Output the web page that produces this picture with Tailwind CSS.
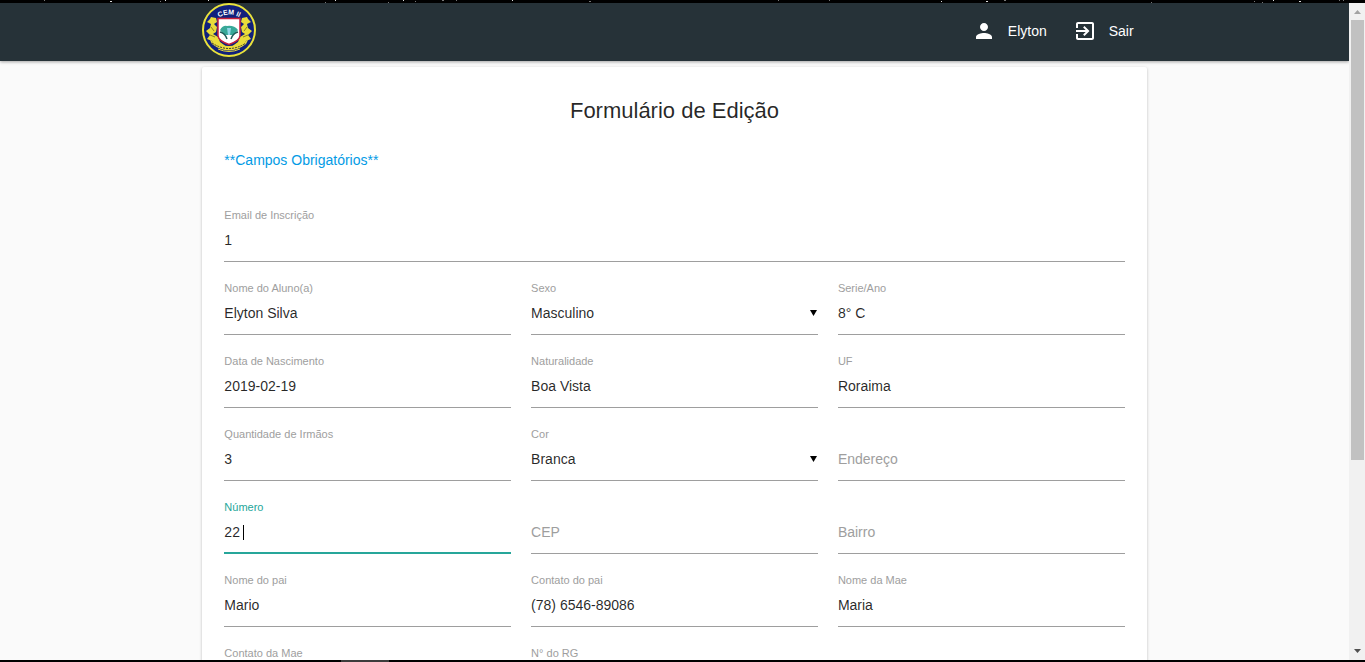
<!DOCTYPE html>
<html lang="pt-BR">
<head>
    <meta charset="UTF-8">
    <meta name="viewport" content="width=device-width, initial-scale=1.0">
    <title>Formulário de Edição</title>
    <script src="https://cdn.jsdelivr.net/npm/@tailwindcss/browser@4"></script>
</head>
<body class="flex h-screen flex-col overflow-hidden bg-black font-['Liberation_Sans',Arial,sans-serif] text-sm text-black/85">
<!-- Borda superior da janela -->
<div class="h-[3px] shrink-0 bg-black">
    <svg class="block h-[3px] w-full" aria-hidden="true">
        <path d="M110 1.500h2M165 .5h1M208 .5h1M335 .5h1M403 .5h1M512 .5h1M941 1.500h1M986 1.500h2M1273 .5h1M1299 1.500h2" stroke="#ddd"/>
        <path d="M44 .5h1M160 1.500h1M325 2.500h1M388 2.500h1M415 1.500h1M442 .5h2M456 .5h1M589 1.500h2M778 .5h1M829 .5h1M1004 .5h2M1151 2.500h1M1254 1.500h1M1262 2.500h1M1339 .5h1M1343 .5h1" stroke="#777"/>
    </svg>
</div>

<div class="flex min-h-0 flex-1">
    <div class="min-w-0 flex-1 overflow-hidden bg-[#fafafa]">
        <!-- Navbar -->
        <nav class="relative h-[58px] bg-[#263238] text-white shadow-[0_1px_3px_rgba(0,0,0,0.35)]">
            <div class="mx-auto flex h-full w-[70%] items-center justify-between pb-[2px]">
                <a href="#" aria-label="CEM II" class="-mt-[2px]">
                    <svg class="block size-[54px]" viewBox="0 0 54 54">
                        <defs><path id="arco" d="M10 19Q27 4 44 19"/></defs>
                        <circle cx="27" cy="27" r="26" fill="#10207c" stroke="#e9e23c" stroke-width="2"/>
                        <text fill="#fff" font-size="7" font-weight="bold" text-anchor="middle"><textPath href="#arco" startOffset="50%">CEM II</textPath></text>
                        <path d="M9 14l5 1 1 4-3 2 3 3-1 5-3 2 5 3 2 5 7 5-1 3-9-4-5-5-5-2 3-4-4-4 4-3 1-4-4-2 3-3z" fill="#e9dc3a"/>
                        <path d="M45 14l-5 1-1 4 3 2-3 3 1 5 3 2-5 3-2 5-7 5 1 3 9-4 5-5 5-2-3-4 4-4-4-3-1-4 4-2-3-3z" fill="#e9dc3a"/>
                        <path d="M9 24l3 4M45 24l-3 4M8 32l5 2M46 32l-5 2" stroke="#8d7f22" stroke-width="1"/>
                        <path d="M8 37q19 12 38 0l-2 4q-17 13-34 0z" fill="#e9dc3a"/>
                        <path d="M10 40q17 11 34 0" fill="none" stroke="#3a3a30" stroke-width="1" stroke-dasharray="2 1"/>
                        <path d="M16 46q11 5 22 0" fill="none" stroke="#e9dc3a" stroke-width="1"/>
                        <path d="M16 15.500h22v17q0 5-11 9q-11-4-11-9z" fill="#fff" stroke="#c8203c" stroke-width="1.500"/>
                        <path d="M18 27q3-5 7-4q7-1 11 4l-4 5H22z" fill="#38a898"/>
                        <path d="M18 29q5 1 7 7M36 29q-5 1-7 7" fill="none" stroke="#205c58" stroke-width="1.500"/>
                        <path d="M25 25h4l-1 7h-2z" fill="#8fd6e8"/>
                    </svg>
                </a>
                <ul class="flex h-full items-center">
                    <li>
                        <a href="#" class="flex items-center gap-3 px-[13px]">
                            <svg class="size-6" viewBox="0 0 24 24" fill="currentColor"><path d="M12 12c2.21 0 4-1.79 4-4s-1.79-4-4-4-4 1.79-4 4 1.79 4 4 4zm0 2c-2.67 0-8 1.34-8 4v2h16v-2c0-2.66-5.33-4-8-4z"/></svg>
                            Elyton
                        </a>
                    </li>
                    <li>
                        <a href="#" class="flex items-center gap-3 px-[13px]">
                            <svg class="size-6" viewBox="0 0 24 24" fill="currentColor"><path d="M10.09 15.59L11.5 17l5-5-5-5-1.41 1.41L12.67 11H3v2h9.67l-2.58 2.59zM19 3H5c-1.11 0-2 .9-2 2v4h2V5h14v14H5v-4H3v4c0 1.1.89 2 2 2h14c1.1 0 2-.9 2-2V5c0-1.1-.9-2-2-2z"/></svg>
                            Sair
                        </a>
                    </li>
                </ul>
            </div>
        </nav>

        <!-- Formulario -->
        <main class="mx-auto mt-[6px] w-[70%] rounded-xs bg-white px-[22px] pt-7 pb-10 shadow-[0_1px_3px_rgba(0,0,0,0.25)]">
            <h1 class="text-center text-[22px] leading-8">Formulário de Edição</h1>
            <p class="mt-[23px] leading-5 text-[#039be5]">**Campos Obrigatórios**</p>

            <form class="mt-[37px] grid grid-cols-3 gap-x-5 gap-y-[18px]">
                <div class="col-span-3">
                    <label for="email" class="block text-[11px] leading-4 text-[#9e9e9e]">Email de Inscrição</label>
                    <input id="email" type="text" value="1" class="block h-[39px] w-full border-b border-[#9e9e9e] pb-1 outline-none">
                </div>
                <div>
                    <label for="nome" class="block text-[11px] leading-4 text-[#9e9e9e]">Nome do Aluno(a)</label>
                    <input id="nome" type="text" value="Elyton Silva" class="block h-[39px] w-full border-b border-[#9e9e9e] pb-1 outline-none">
                </div>
                <div class="relative">
                    <label for="sexo" class="block text-[11px] leading-4 text-[#9e9e9e]">Sexo</label>
                    <select id="sexo" class="block h-[39px] w-full appearance-none border-b border-[#9e9e9e] pb-1 outline-none">
                        <option>Masculino</option>
                        <option>Feminino</option>
                    </select>
                    <svg class="pointer-events-none absolute top-[30px] right-[1px] h-[6px] w-[7px]" viewBox="0 0 7 6"><path d="M0 0h7L3.500 6z"/></svg>
                </div>
                <div>
                    <label for="serie" class="block text-[11px] leading-4 text-[#9e9e9e]">Serie/Ano</label>
                    <input id="serie" type="text" value="8° C" class="block h-[39px] w-full border-b border-[#9e9e9e] pb-1 outline-none">
                </div>
                <div>
                    <label for="nascimento" class="block text-[11px] leading-4 text-[#9e9e9e]">Data de Nascimento</label>
                    <input id="nascimento" type="text" value="2019-02-19" class="block h-[39px] w-full border-b border-[#9e9e9e] pb-1 outline-none">
                </div>
                <div>
                    <label for="naturalidade" class="block text-[11px] leading-4 text-[#9e9e9e]">Naturalidade</label>
                    <input id="naturalidade" type="text" value="Boa Vista" class="block h-[39px] w-full border-b border-[#9e9e9e] pb-1 outline-none">
                </div>
                <div>
                    <label for="uf" class="block text-[11px] leading-4 text-[#9e9e9e]">UF</label>
                    <input id="uf" type="text" value="Roraima" class="block h-[39px] w-full border-b border-[#9e9e9e] pb-1 outline-none">
                </div>
                <div>
                    <label for="irmaos" class="block text-[11px] leading-4 text-[#9e9e9e]">Quantidade de Irmãos</label>
                    <input id="irmaos" type="text" value="3" class="block h-[39px] w-full border-b border-[#9e9e9e] pb-1 outline-none">
                </div>
                <div class="relative">
                    <label for="cor" class="block text-[11px] leading-4 text-[#9e9e9e]">Cor</label>
                    <select id="cor" class="block h-[39px] w-full appearance-none border-b border-[#9e9e9e] pb-1 outline-none">
                        <option>Branca</option>
                        <option>Parda</option>
                    </select>
                    <svg class="pointer-events-none absolute top-[30px] right-[1px] h-[6px] w-[7px]" viewBox="0 0 7 6"><path d="M0 0h7L3.500 6z"/></svg>
                </div>
                <div class="pt-4">
                    <input id="endereco" type="text" aria-label="Endereço" placeholder="Endereço" class="block h-[39px] w-full border-b border-[#9e9e9e] pb-1 outline-none placeholder:text-[#9e9e9e]">
                </div>
                <!-- Campo ativo -->
                <div class="relative">
                    <label for="numero" class="block text-[11px] leading-4 text-[#26a69a]">Número</label>
                    <input id="numero" type="text" value="22" class="block h-[39px] w-full border-b-2 border-[#26a69a] pb-[3px] outline-none">
                    <span class="absolute top-[26px] left-[19px] h-[15px] w-px bg-black"></span>
                </div>
                <div class="pt-4">
                    <input id="cep" type="text" aria-label="CEP" placeholder="CEP" class="block h-[39px] w-full border-b border-[#9e9e9e] pb-1 outline-none placeholder:text-[#9e9e9e]">
                </div>
                <div class="pt-4">
                    <input id="bairro" type="text" aria-label="Bairro" placeholder="Bairro" class="block h-[39px] w-full border-b border-[#9e9e9e] pb-1 outline-none placeholder:text-[#9e9e9e]">
                </div>
                <div>
                    <label for="pai" class="block text-[11px] leading-4 text-[#9e9e9e]">Nome do pai</label>
                    <input id="pai" type="text" value="Mario" class="block h-[39px] w-full border-b border-[#9e9e9e] pb-1 outline-none">
                </div>
                <div>
                    <label for="contatoPai" class="block text-[11px] leading-4 text-[#9e9e9e]">Contato do pai</label>
                    <input id="contatoPai" type="text" value="(78) 6546-89086" class="block h-[39px] w-full border-b border-[#9e9e9e] pb-1 outline-none">
                </div>
                <div>
                    <label for="mae" class="block text-[11px] leading-4 text-[#9e9e9e]">Nome da Mae</label>
                    <input id="mae" type="text" value="Maria" class="block h-[39px] w-full border-b border-[#9e9e9e] pb-1 outline-none">
                </div>
                <div>
                    <label for="contatoMae" class="block text-[11px] leading-4 text-[#9e9e9e]">Contato da Mae</label>
                    <input id="contatoMae" type="text" class="block h-[39px] w-full border-b border-[#9e9e9e] pb-1 outline-none">
                </div>
                <div>
                    <label for="rg" class="block text-[11px] leading-4 text-[#9e9e9e]">N° do RG</label>
                    <input id="rg" type="text" class="block h-[39px] w-full border-b border-[#9e9e9e] pb-1 outline-none">
                </div>
            </form>
        </main>
    </div>

    <!-- Barra de rolagem -->
    <div class="flex w-4 shrink-0 flex-col items-center bg-[#f1f1f1]" aria-hidden="true">
        <svg class="h-[17px] w-4 shrink-0" viewBox="0 0 16 17"><path d="M5 11h7L8.500 7z" fill="#a3a3a3"/></svg>
        <div class="ml-px h-[67%] w-[13px] bg-[#c1c1c1]"></div>
        <svg class="mt-auto h-[17px] w-4 shrink-0" viewBox="0 0 16 17"><path d="M5 6h7L8.500 10z" fill="#505050"/></svg>
    </div>
</div>

<!-- Borda inferior da janela -->
<div class="flex h-[2px] shrink-0 bg-black">
    <div class="ml-[25%] h-full w-12 bg-[#3c3c3c]"></div>
</div>
</body>
</html>
